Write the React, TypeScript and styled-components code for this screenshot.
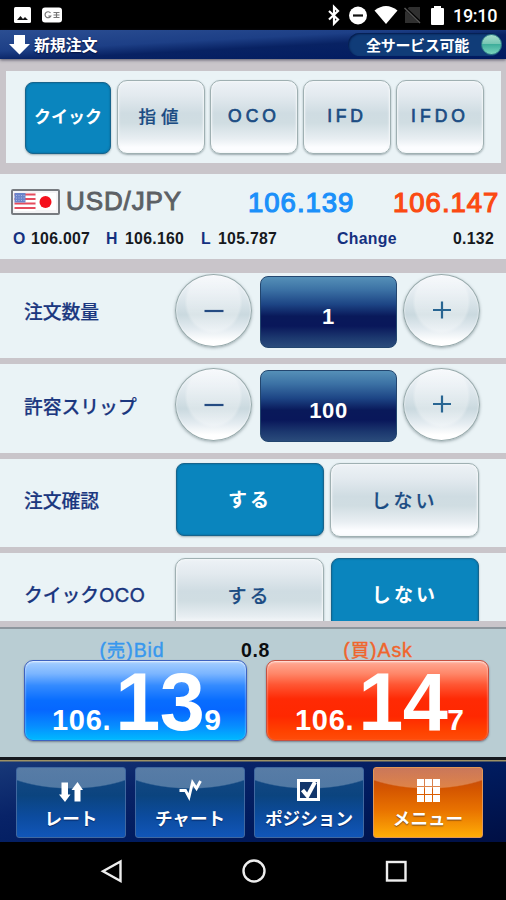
import React from "react";
import styled, { createGlobalStyle, css } from "styled-components";

const Global = createGlobalStyle`
  * { box-sizing: border-box; }
  body { margin: 0; background: #000; overflow: hidden; }
  button { border: 0; padding: 0; margin: 0; font: inherit; color: inherit; background: none; }
`;

const Screen = styled.div`
  width: 506px;
  height: 900px;
  display: flex;
  flex-direction: column;
  overflow: hidden;
  background: #c9c5ca;
  font-family: "Liberation Sans", "Noto Sans CJK JP", sans-serif;
  white-space: nowrap;
`;

const StatusBar = styled.div`
  height: 30px;
  flex: none;
  background: #000;
  display: flex;
  align-items: center;
  padding: 0 9px 0 14px;
  color: #fff;
`;

const StatusGroup = styled.div<{ $end?: boolean }>`
  display: flex;
  align-items: center;
  margin-left: ${(p) => (p.$end ? "auto" : "0")};
  svg { display: block; }
`;

const Clock = styled.span`
  font: 500 18px/30px Roboto, sans-serif;
  width: 44px;
  padding-top: 1px;
  margin-left: 7px;
  letter-spacing: -0.3px;
`;

const Header = styled.header`
  height: 29px;
  flex: none;
  display: flex;
  align-items: center;
  padding: 0 4px 0 9px;
  color: #fff;
  background: linear-gradient(177deg, #2b4e92 0%, #1d3f86 38%, #082263 56%, #001a60 100%);
  box-shadow: 0 1px 3px rgba(40, 40, 60, 0.7);
  position: relative;
`;

const Title = styled.h1`
  margin: 0 0 0 4px;
  font-size: 16px;
  line-height: 29px;
  font-weight: 700;
  padding-top: 2px;
  letter-spacing: -0.2px;
  text-shadow: 0 1px 2px #000c38;
`;

const ServicePill = styled.div`
  margin-left: auto;
  height: 23px;
  width: 154px;
  border-radius: 12px;
  background: #103c78;
  box-shadow: inset 1px 1px 2px #03194a;
  display: flex;
  align-items: center;
  justify-content: space-between;
  padding-left: 18px;
  font-size: 15px;
  letter-spacing: -0.3px;
  font-weight: 700;
`;

const Lamp = styled.i`
  width: 21px;
  height: 21px;
  border-radius: 50%;
  border: 1px solid #327f88;
  background: linear-gradient(#a5dccb 0%, #78c7b4 45%, #3fae9b 50%, #79d5be 100%);
`;

const face = css<{ $on?: boolean }>`
  ${(p) =>
    p.$on
      ? css`
          color: #fff;
          font-weight: 700;
          background: #0a85be;
          border: 1px solid #17648c;
          box-shadow: 0 1px 2px rgba(50, 80, 90, 0.4), inset 0 0 2px #07608f;
        `
      : css`
          color: #1b4c83;
          font-weight: 500;
          background: linear-gradient(#edf2f6 0%, #e3eaef 20%, #cfdce2 45%, #d0dde2 58%, #e8eef2 80%, #fcfdff 92%);
          border: 1.5px solid #9fb0b2;
          box-shadow: 0 1px 2px rgba(80, 100, 105, 0.5), inset 0 0 2px 1px #f4f7f9;
          -webkit-text-stroke: 0.2px currentColor;
        `}
`;

const TabPanel = styled.nav`
  flex: none;
  margin: 12px 5px 11px 6px;
  height: 92px;
  padding: 9px 0 0 18px;
  display: flex;
  gap: 5px;
  background: #eaf3f6;
`;

const Tab = styled.button<{ $on?: boolean; $spacing: number }>`
  width: 88px;
  height: 74px;
  border-radius: 10px;
  font-size: 17.5px;
  letter-spacing: ${(p) => p.$spacing}px;
  ${face}
  ${(p) => p.$on && "width: 86px; height: 72px; margin: 2px 1px 0; border-radius: 8px; font-size: 17px; padding-bottom: 5px;"}
  ${(p) => !p.$on && "-webkit-text-stroke: 0.7px currentColor; padding-bottom: 1px;"}
`;

const TabKanji = styled.span`
  display: block;
  margin-top: -2px;
  -webkit-text-stroke: 0.2px currentColor;
`;

const Quote = styled.section`
  flex: none;
  height: 85px;
  background: #eaf3f6;
  margin-bottom: 14px;
  padding: 8px 8px 0 11px;
`;

const QuoteLine = styled.div`
  display: flex;
  align-items: center;
  height: 39px;
`;

const Flags = styled.div`
  width: 49px;
  height: 26px;
  border: 2px solid #777b80;
  border-radius: 2px;
  background: #f4f4f6;
  flex: none;
  svg { display: block; }
`;

const Pair = styled.span`
  margin-left: 6px;
  width: 182px;
  flex: none;
  font-size: 26px;
  letter-spacing: 0.9px;
  color: #5c6065;
  -webkit-text-stroke: 0.9px #5c6065;
`;

const Rate = styled.span<{ $side: "bid" | "ask" }>`
  width: 106px;
  flex: none;
  font-size: 27.5px;
  letter-spacing: 1px;
  padding-top: 2px;
  color: ${(p) => (p.$side === "bid" ? "#1b90fa" : "#fb4a12")};
  -webkit-text-stroke: 1.2px currentColor;
  & + & { margin-left: 39px; }
`;

const Stats = styled.div`
  display: grid;
  grid-template-columns: 18px 75px 19px 76px 17px 119px 1fr auto;
  padding-left: 2px;
  padding-right: 4px;
  line-height: 36px;
  font-size: 15.8px;
  letter-spacing: 0.3px;
  font-weight: 700;
  color: #16191d;
`;

const Key = styled.span`
  color: #14307f;
`;

const Rows = styled.main`
  flex: none;
  height: 348px;
  overflow: hidden;
`;

const Row = styled.section<{ $h: number; $pad: number; $label: number }>`
  height: ${(p) => p.$h}px;
  border-bottom: 6px solid #c9c5ca;
  background: #eaf3f6;
  display: flex;
  align-items: flex-start;
  padding: ${(p) => p.$pad}px 0 0 24px;
  & > label { margin-top: ${(p) => p.$label}px; }
`;

const Label = styled.label`
  width: 151px;
  font-size: 18.8px;
  line-height: 28px;
  font-weight: 500;
  color: #1b377f;
  -webkit-text-stroke: 0.2px currentColor;
`;

const Latin = styled.span`
  display: inline-block;
  font: 19px/28px Inter, sans-serif;
  transform: scaleX(1.07);
  transform-origin: 0 50%;
  -webkit-text-stroke: 0.4px currentColor;
`;

const Round = styled.button`
  width: 77px;
  height: 73px;
  border-radius: 50%;
  border: 1.5px solid #98aaac;
  background:
    radial-gradient(ellipse 29px 32px at 50% 38%, rgba(255, 255, 255, 0.3) 0 90%, transparent 100%),
    linear-gradient(#f4f7fb 0%, #e3ebf0 25%, #cad9df 56%, #e3ebf0 76%, #fff 93%);
  box-shadow: 0 1px 3px rgba(80, 100, 105, 0.5), inset 0 0 2px #fff;
  display: grid;
  place-items: center;
  svg { display: block; }
`;

const Amount = styled.output`
  width: 137px;
  height: 72px;
  margin: 2px 6px 0 8px;
  border-radius: 8px;
  border: 1px solid #23466f;
  background: linear-gradient(#5590b8 0%, #3c72a5 18%, #1d4585 39%, #09195a 56%, #09175a 70%, #1c386f 87%, #2a4b7b 100%);
  color: #fff;
  font-size: 22px;
  font-weight: 700;
  letter-spacing: 0.6px;
  line-height: 79px;
  text-align: center;
`;

const Choice = styled.button<{ $on?: boolean; $n: number }>`
  width: 149px;
  height: 74px;
  border-radius: 10px;
  margin-right: 6px;
  font-size: 19px;
  letter-spacing: ${(p) => (p.$n === 2 ? 3 : 3.2)}px;
  padding-bottom: 2px;
  ${face}
  ${(p) => p.$on && "width: 148px; height: 73px; margin-left: 1px; border-radius: 8px;"}
`;

const Trade = styled.section`
  flex: none;
  height: 130px;
  margin-top: 6px;
  background: #b9cdd3;
  border-top: 2px solid #8d979e;
  padding: 8px 17px 0 24px;
`;

const SideLabels = styled.div`
  display: grid;
  grid-template-columns: 223px 19px 223px;
  height: 23px;
  line-height: 26px;
  font-size: 19.5px;
  text-align: center;
  justify-items: center;
`;

const Side = styled.span<{ $side: "bid" | "ask" }>`
  color: ${(p) => (p.$side === "bid" ? "#3898ee" : "#f0652c")};
  -webkit-text-stroke: 0.4px currentColor;
  letter-spacing: 0.9px;
  margin-left: ${(p) => (p.$side === "bid" ? -7 : 1)}px;
`;

const Kanji = styled.span`
  font-size: 18.5px;
`;

const Spread = styled.b`
  font-size: 19.5px;
  letter-spacing: 0.7px;
  color: #0b0d10;
  width: 40px;
  margin-left: -2px;
`;

const TradeButtons = styled.div`
  display: flex;
  gap: 19px;
`;

const TradeButton = styled.button<{ $side: "bid" | "ask" }>`
  width: 223px;
  height: 81px;
  border-radius: 9px;
  border: 1px solid ${(p) => (p.$side === "bid" ? "#3d62c0" : "#c6503f")};
  background: ${(p) =>
    p.$side === "bid"
      ? "linear-gradient(#a6cfff 0%, #7bb5ff 16%, #348bff 31%, #086dff 50%, #0667ff 62%, #078cff 82%, #00b9ff 100%)"
      : "linear-gradient(#ffac97 0%, #ff8668 16%, #ff5633 30%, #ff2a05 48%, #ff2800 70%, #ff4300 90%, #ff4c0a 100%)"};
  box-shadow: 0 1px 2px rgba(50, 60, 80, 0.5), inset 0 1px 2px rgba(255, 255, 255, 0.75);
  color: #fff;
  font-weight: 700;
  display: flex;
  align-items: baseline;
  padding-left: ${(p) => (p.$side === "bid" ? 27 : 28)}px;
  line-height: 83px;
`;

const Small = styled.span`
  font-size: 29px;
  letter-spacing: 0.7px;
`;

const Big = styled.span`
  font-size: 81px;
  letter-spacing: -0.5px;
  margin: 0 0 0 4px;
`;

const Pip = styled.span`
  font-size: 30px;
`;

const NavBar = styled.nav`
  flex: none;
  height: 85px;
  border-top: 3px solid #15191e;
  background: linear-gradient(168deg, #183979 0%, #082368 30%, #001b5e 60%, #000f44 100%);
  position: relative;
  display: flex;
  gap: 9px;
  padding: 7px 0 0 16px;
  box-shadow: inset 0 1.5px 0 #9d9164;
`;

const NavButton = styled.button<{ $active?: boolean }>`
  width: 110px;
  height: 71px;
  border-radius: 3px;
  border: 1px solid ${(p) => (p.$active ? "#e19757" : "#4068a0")};
  color: #fff;
  background:
    radial-gradient(ellipse 92px 42px at 50% -21px, rgba(255, 255, 255, 0.28) 97%, transparent 100%),
    ${(p) =>
      p.$active
        ? "linear-gradient(#b6431b 0%, #d45500 30%, #e87100 60%, #ffad06 100%)"
        : "linear-gradient(#174984 0%, #0b447f 40%, #0c4ca0 72%, #1156b8 100%)"};
  display: flex;
  flex-direction: column;
  align-items: center;
  padding-top: 11px;
  font-size: 17.6px;
  line-height: 25px;
  font-weight: 700;
  text-shadow: 0 1px 1px rgba(0, 0, 40, 0.5);
  svg { display: block; flex: none; }
`;

const SystemBar = styled.footer`
  height: 58px;
  flex: none;
  background: #000;
  svg { display: block; }
`;

const Sign = ({ plus }: { plus?: boolean }) => (
  <svg width="20" height="20" viewBox="0 0 20 20" stroke={plus ? "#286592" : "#244b82"} strokeWidth="2.200">
    <path d={plus ? "M1 9h18M10 0.500v17" : "M0.500 10h19"} />
  </svg>
);

const Stepper = ({ value }: { value: number }) => (
  <>
    <Round aria-label="minus"><Sign /></Round>
    <Amount>{value}</Amount>
    <Round aria-label="plus"><Sign plus /></Round>
  </>
);

const Switch = ({ yes }: { yes: boolean }) => (
  <>
    <Choice $on={yes} $n={2}>する</Choice>
    <Choice $on={!yes} $n={3}>しない</Choice>
  </>
);

const tabs = [
  { name: "クイック", spacing: 0 },
  { name: "指値", spacing: 5, kanji: true },
  { name: "OCO", spacing: 4 },
  { name: "IFD", spacing: 3.8 },
  { name: "IFDO", spacing: 4 },
];

export default function App() {
  return (
    <>
      <Global />
      <Screen>
        <StatusBar>
          <StatusGroup>
            <svg width="50" height="18" viewBox="14 6 50 18">
              <rect x="14" y="7" width="17" height="16" rx="1.500" fill="#fff" />
              <path d="M17 20l3.500-4 2.500 3 2-2 3 3z" fill="#111" />
              <rect x="42" y="7.500" width="20" height="15" rx="3" fill="#fff" />
              <path d="M50.500 13a3 3 0 1 0 .3 3h-2.500M53.500 12.500h6M53.500 15h6M53.500 17.500h6M56.500 12v6" fill="none" stroke="#777" strokeWidth="1.200" />
            </svg>
          </StatusGroup>
          <StatusGroup $end>
            <svg width="120" height="24" viewBox="327 3 120 24">
              <path d="M330 11l9 8.500-4 4V7l4 4-9 8.500" fill="none" stroke="#fff" strokeWidth="2.200" />
              <circle cx="359" cy="15.500" r="9" fill="#fff" />
              <path d="M354 15.500h10" stroke="#111" strokeWidth="2.200" />
              <path d="M375.500 10.500Q387 1.500 398.500 10.500L387 24z" fill="#fff" />
              <path d="M410 7h11v16h-15V12z" fill="#303030" />
              <path d="M405 7l17 16" stroke="#000" strokeWidth="3" />
              <path d="M405.500 8l15.500 15" stroke="#555" strokeWidth="1.500" />
              <path d="M435 6h7v2h2q1 0 1 1v15q0 1-1 1h-11q-1 0-1-1V9q0-1 1-1h2z" fill="#fff" />
            </svg>
            <Clock>19:10</Clock>
          </StatusGroup>
        </StatusBar>

        <Header>
          <svg width="21" height="21" viewBox="0 0 21 21">
            <path d="M5 1h11v9h5L10.500 20.500 0 10h5z" fill="#fff" />
          </svg>
          <Title>新規注文</Title>
          <ServicePill>
            全サービス可能
            <Lamp />
          </ServicePill>
        </Header>

        <TabPanel>
          {tabs.map((t, i) => (
            <Tab key={t.name} $on={i === 0} $spacing={t.spacing}>
              {t.kanji ? <TabKanji>{t.name}</TabKanji> : t.name}
            </Tab>
          ))}
        </TabPanel>

        <Quote>
          <QuoteLine>
            <Flags>
              <svg width="45" height="22" viewBox="0 0 45 22">
                <rect x="1.500" y="2" width="21" height="18" fill="#fff" />
                <path d="M1.500 3.500h21M1.500 8h21M1.500 12.500h21M1.500 17h21" stroke="#e54b5d" strokeWidth="2.200" />
                <rect x="1.500" y="2" width="11" height="9.500" fill="#6c84ca" />
                <path d="M3 4.500h9M3 7h9M3 9.500h9" stroke="#a9b5df" strokeDasharray="1 1.500" />
                <rect x="23" y="2" width="20" height="17" fill="#fff" />
                <circle cx="32.500" cy="11" r="6" fill="#f5101c" />
              </svg>
            </Flags>
            <Pair>USD/JPY</Pair>
            <Rate $side="bid">106.139</Rate>
            <Rate $side="ask">106.147</Rate>
          </QuoteLine>
          <Stats>
            <Key>O</Key><span>106.007</span>
            <Key>H</Key><span>106.160</span>
            <Key>L</Key><span>105.787</span>
            <Key>Change</Key><span>0.132</span>
          </Stats>
        </Quote>

        <Rows>
          <Row $h={91} $pad={1} $label={25}>
            <Label>注文数量</Label>
            <Stepper value={1} />
          </Row>
          <Row $h={95} $pad={4} $label={26}>
            <Label>許容スリップ</Label>
            <Stepper value={100} />
          </Row>
          <Row $h={94} $pad={4} $label={25}>
            <Label>注文確認</Label>
            <Switch yes />
          </Row>
          <Row $h={94} $pad={5} $label={24}>
            <Label>クイック<Latin>OCO</Latin></Label>
            <Switch yes={false} />
          </Row>
        </Rows>

        <Trade>
          <SideLabels>
            <Side $side="bid">(<Kanji>売</Kanji>)Bid</Side>
            <Spread>0.8</Spread>
            <Side $side="ask">(<Kanji>買</Kanji>)Ask</Side>
          </SideLabels>
          <TradeButtons>
            <TradeButton $side="bid"><Small>106.</Small><Big>13</Big><Pip>9</Pip></TradeButton>
            <TradeButton $side="ask"><Small>106.</Small><Big>14</Big><Pip>7</Pip></TradeButton>
          </TradeButtons>
        </Trade>

        <NavBar>
          <NavButton>
            <svg width="26" height="28" viewBox="0 0 26 28" fill="#fff">
              <path d="M3.500 3.500h6.500v12h2.500L7 23 1 15.500h2.500zM16.500 22.500h6V11H25L19.500 3l-6 8h3z" />
            </svg>
            レート
          </NavButton>
          <NavButton>
            <svg width="26" height="28" viewBox="0 0 26 28" fill="none" stroke="#fff" strokeWidth="2.800">
              <path d="M2.500 11.500h6l3.500 6.500 3.500-14.500 4 6 4-7.500" />
            </svg>
            チャート
          </NavButton>
          <NavButton>
            <svg width="26" height="28" viewBox="0 0 26 28" fill="none" stroke="#fff">
              <rect x="2.500" y="1.500" width="20" height="19" strokeWidth="3" fill="#12366b" />
              <path d="M6.500 11l5 6L19 3" strokeWidth="4" />
            </svg>
            ポジション
          </NavButton>
          <NavButton $active>
            <svg width="26" height="28" viewBox="0 0 26 28" fill="#fff">
              <path d="M2 0h7v7H2zM10 0h7v7h-7zM18 0h7v7h-7zM2 8h7v7H2zM10 8h7v7h-7zM18 8h7v7h-7zM2 16h7v7H2zM10 16h7v7h-7zM18 16h7v7h-7z" />
            </svg>
            メニュー
          </NavButton>
        </NavBar>

        <SystemBar>
          <svg width="506" height="58" viewBox="0 842 506 58" fill="none" stroke="#eee" strokeWidth="2.400">
            <path d="M120.500 861.500v19.500L103 871.200z" />
            <circle cx="254" cy="871" r="10.500" />
            <rect x="387" y="862" width="18.500" height="18.500" />
          </svg>
        </SystemBar>
      </Screen>
    </>
  );
}
